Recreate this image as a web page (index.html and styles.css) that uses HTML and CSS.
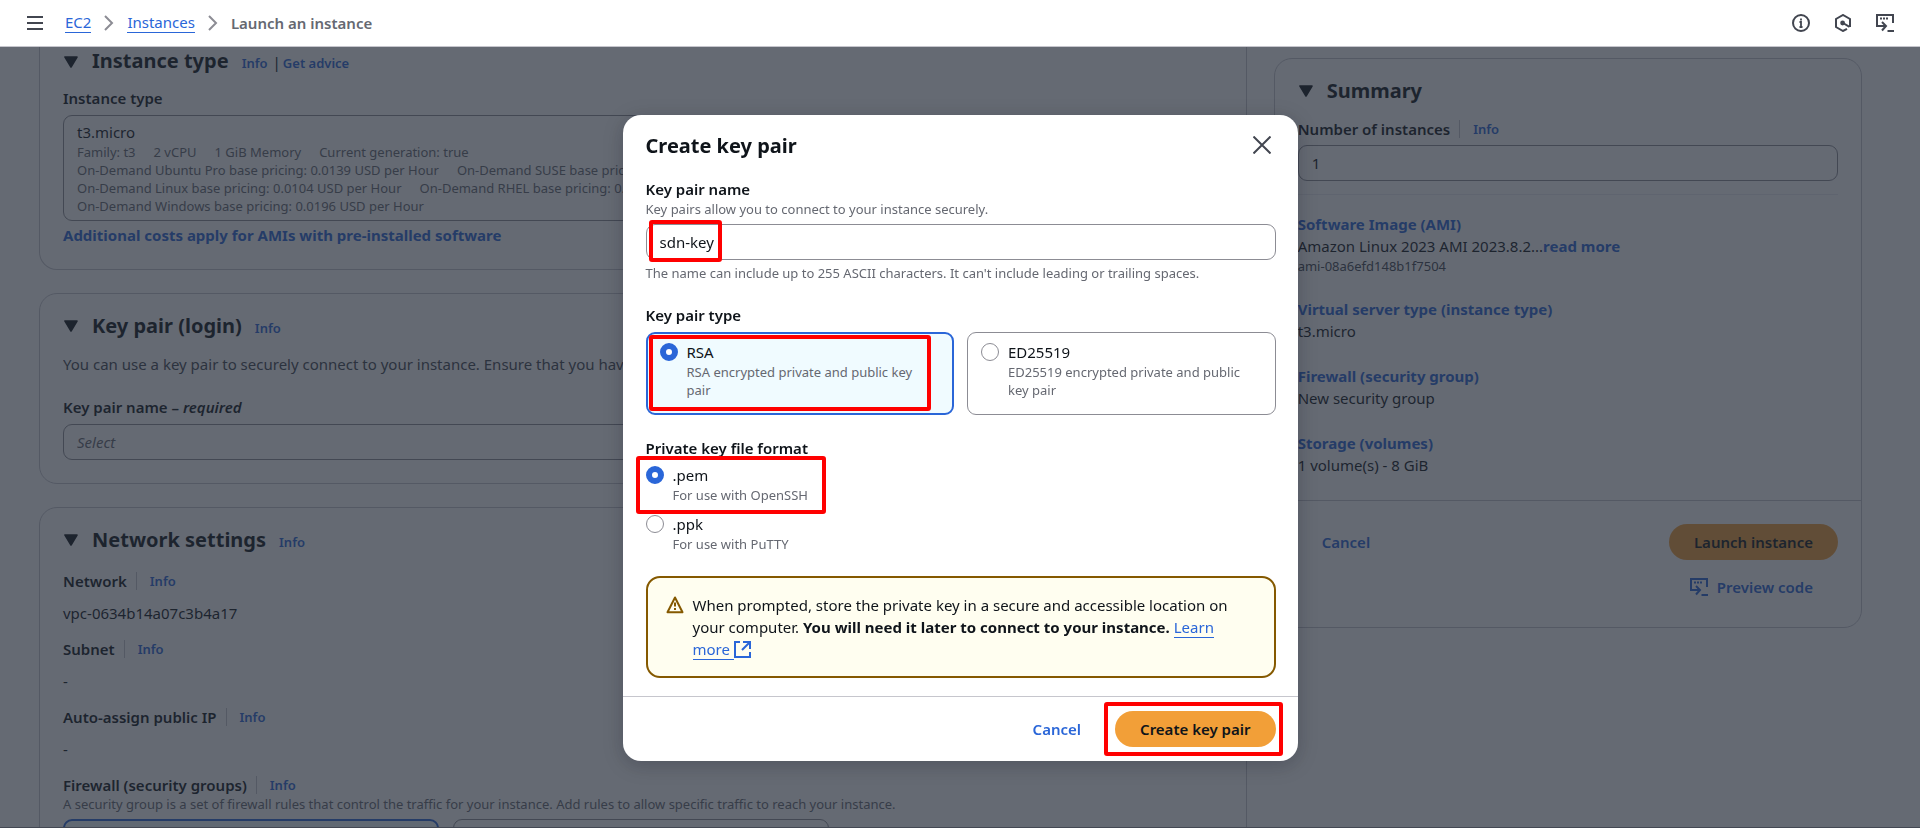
FILE: index.html
```html
<!DOCTYPE html>
<html lang="en">
<head>
<meta charset="utf-8">
<title>Launch an instance | EC2</title>
<link rel="stylesheet" href="styles.css">
</head>
<body>
<svg class="sprite" aria-hidden="true">
  <symbol id="caret" viewBox="0 0 14 12"><path d="M1 1h12L7 11z" fill="currentColor" stroke="currentColor" stroke-width="1.6" stroke-linejoin="round"/></symbol>
  <symbol id="chevron" viewBox="0 0 10 16"><path d="M1 1l7 7-7 7" fill="none" stroke="currentColor" stroke-width="2"/></symbol>
  <symbol id="shell" viewBox="0 0 18 18"><path d="M4 12H1V1h16v8" fill="none" stroke="currentColor" stroke-width="2"/><path d="M4 4.500h2m1 0h2m1 0h2M11.500 17H18" fill="none" stroke="currentColor" stroke-width="2"/><path d="M3 12h6.500M6 8l4 4-4 4.500" fill="none" stroke="currentColor" stroke-width="2"/></symbol>
</svg>

<header class="topbar">
  <button class="icon-button" type="button" aria-label="Open navigation">
    <svg width="16" height="16" viewBox="0 0 16 16"><path d="M0 2h16M0 8h16M0 14h16" stroke="currentColor" stroke-width="2"/></svg>
  </button>
  <nav class="crumbs" aria-label="Breadcrumbs">
    <a href="#">EC2</a>
    <svg width="10" height="16"><use href="#chevron"/></svg>
    <a href="#">Instances</a>
    <svg width="10" height="16"><use href="#chevron"/></svg>
    <span class="current">Launch an instance</span>
  </nav>
  <div class="tools">
    <button class="icon-button" type="button" aria-label="Info">
      <svg width="18" height="18" viewBox="0 0 18 18"><circle cx="9" cy="9" r="8" fill="none" stroke="currentColor" stroke-width="2"/><path d="M9 4.500v2M7.500 8H9v5M7.500 13h3" fill="none" stroke="currentColor" stroke-width="1.800"/></svg>
    </button>
    <button class="icon-button" type="button" aria-label="Assistant">
      <svg width="18" height="18" viewBox="0 0 18 18"><path d="M13 14.800L9 17 2 13V5l7-4 7 4v8" fill="none" stroke="currentColor" stroke-width="2"/><circle cx="8.600" cy="9" r="2.400" fill="currentColor"/><path d="M9 9l6.500 3.800" stroke="currentColor" stroke-width="2"/></svg>
    </button>
    <button class="icon-button" type="button" aria-label="CloudShell">
      <svg width="18" height="18"><use href="#shell"/></svg>
    </button>
  </div>
</header>

<main class="page">
  <div class="column">
    <section class="card card-first">
      <h2 class="heading"><svg class="caret" width="14" height="12"><use href="#caret"/></svg>Instance type <a class="info" href="#">Info</a><span class="bar">|</span><a class="info" href="#">Get advice</a></h2>
      <div class="label" id="type-label">Instance type</div>
      <button class="rich-select" type="button" aria-labelledby="type-label">
        <span class="rich-title">t3.micro</span>
        <span class="tags"><span>Family: t3</span><span>2 vCPU</span><span>1 GiB Memory</span><span>Current generation: true</span></span>
        <span class="tags"><span>On-Demand Ubuntu Pro base pricing: 0.0139 USD per Hour</span><span>On-Demand SUSE base pricing: 0.0104 USD per Hour</span></span>
        <span class="tags"><span>On-Demand Linux base pricing: 0.0104 USD per Hour</span><span>On-Demand RHEL base pricing: 0.0392 USD per Hour</span></span>
        <span class="tags"><span>On-Demand Windows base pricing: 0.0196 USD per Hour</span></span>
      </button>
      <a class="strong-link" href="#">Additional costs apply for AMIs with pre-installed software</a>
    </section>

    <section class="card card-key">
      <h2 class="heading"><svg class="caret" width="14" height="12"><use href="#caret"/></svg>Key pair (login) <a class="info" href="#">Info</a></h2>
      <p class="intro">You can use a key pair to securely connect to your instance. Ensure that you have access to the selected key pair.</p>
      <label class="label" for="key-pair">Key pair name – <i>required</i></label>
      <select class="field placeholder" id="key-pair"><option>Select</option></select>
    </section>

    <section class="card card-network">
      <h2 class="heading"><svg class="caret" width="14" height="12"><use href="#caret"/></svg>Network settings <a class="info" href="#">Info</a></h2>
      <dl class="facts">
        <div><dt>Network <a class="info ruled" href="#">Info</a></dt><dd>vpc-0634b14a07c3b4a17</dd></div>
        <div><dt>Subnet <a class="info ruled" href="#">Info</a></dt><dd>-</dd></div>
        <div><dt>Auto-assign public IP <a class="info ruled" href="#">Info</a></dt><dd>-</dd></div>
        <div><dt>Firewall (security groups) <a class="info ruled" href="#">Info</a></dt></div>
      </dl>
      <p class="hint">A security group is a set of firewall rules that control the traffic for your instance. Add rules to allow specific traffic to reach your instance.</p>
      <div class="group-tiles"><div class="group-tile chosen"></div><div class="group-tile"></div></div>
    </section>
  </div>

  <aside class="summary">
    <div class="summary-body">
      <h2 class="heading"><svg class="caret" width="14" height="12"><use href="#caret"/></svg>Summary</h2>
      <div class="count-label"><label class="label" for="count">Number of instances</label><a class="info ruled" href="#">Info</a></div>
      <input class="field" id="count" type="text" value="1">
      <hr class="rule">
      <div class="entries">
        <div><a class="strong-link" href="#">Software Image (AMI)</a><p>Amazon Linux 2023 AMI 2023.8.2...<a class="strong-link" href="#">read more</a></p><p class="ami">ami-08a6efd148b1f7504</p></div>
        <div><a class="strong-link" href="#">Virtual server type (instance type)</a><p>t3.micro</p></div>
        <div><a class="strong-link" href="#">Firewall (security group)</a><p>New security group</p></div>
        <div><a class="strong-link" href="#">Storage (volumes)</a><p>1 volume(s) - 8 GiB</p></div>
      </div>
    </div>
    <div class="summary-foot">
      <button class="button plain" type="button">Cancel</button>
      <div class="actions">
        <button class="button primary" type="button">Launch instance</button>
        <button class="button plain" type="button"><svg width="18" height="18"><use href="#shell"/></svg>Preview code</button>
      </div>
    </div>
  </aside>
</main>
<footer class="footline"></footer>

<div class="overlay">
  <form class="modal" role="dialog" aria-labelledby="modal-title">
    <div class="modal-head">
      <h2 id="modal-title">Create key pair</h2>
      <button class="icon-button" type="button" aria-label="Close">
        <svg width="18" height="18" viewBox="0 0 18 18"><path d="M.5.5l17 17M17.500.5l-17 17" stroke="currentColor" stroke-width="2"/></svg>
      </button>
    </div>
    <div class="modal-body">
      <div class="group">
        <label class="label" for="name">Key pair name</label>
        <p class="hint">Key pairs allow you to connect to your instance securely.</p>
        <div class="marked"><input class="field" id="name" type="text" value="sdn-key"><span class="mark mark-name"></span></div>
        <p class="hint constraint">The name can include up to 255 ASCII characters. It can't include leading or trailing spaces.</p>
      </div>
      <fieldset class="group">
        <legend class="label">Key pair type</legend>
        <div class="tiles">
          <label class="tile chosen"><input class="radio" type="radio" name="type" checked><span><span class="option">RSA</span><span class="hint">RSA encrypted private and public key pair</span></span><span class="mark mark-tile"></span></label>
          <label class="tile"><input class="radio" type="radio" name="type"><span><span class="option">ED25519</span><span class="hint">ED25519 encrypted private and public key pair</span></span></label>
        </div>
      </fieldset>
      <fieldset class="group formats">
        <legend class="label">Private key file format</legend>
        <label class="format"><input class="radio" type="radio" name="format" checked><span><span class="option">.pem</span><span class="hint">For use with OpenSSH</span></span><span class="mark mark-format"></span></label>
        <label class="format"><input class="radio" type="radio" name="format"><span><span class="option">.ppk</span><span class="hint">For use with PuTTY</span></span></label>
      </fieldset>
      <div class="alert">
        <svg width="18" height="18" viewBox="0 0 18 18"><path d="M9 1.500l7.500 14.800h-15z" fill="none" stroke="currentColor" stroke-width="2" stroke-linejoin="round"/><path d="M9 6.500v4M9 12v2" stroke="currentColor" stroke-width="2"/></svg>
        <p>When prompted, store the private key in a secure and accessible location on your computer. <b>You will need it later to connect to your instance.</b> <a href="#"><span class="underlined">Learn more&nbsp;</span><svg width="17" height="17" viewBox="0 0 17 17"><path d="M6 1H1v15h15v-5M9 1h7v7M16 1L8 9" fill="none" stroke="currentColor" stroke-width="2"/></svg></a></p>
      </div>
    </div>
    <div class="modal-foot">
      <button class="button plain" type="button">Cancel</button>
      <div class="marked"><button class="button primary" type="submit">Create key pair</button><span class="mark mark-submit"></span></div>
    </div>
  </form>
</div>
</body>
</html>
```
FILE: styles.css
```css
:root {
  --text: #0f141a;
  --muted: #656871;
  --icon: #424650;
  --blue: #2a66d8;
  --line: #c6c6cd;
  --field-line: #8c8c94;
  --orange: #f29f38;
}
* { box-sizing: border-box; }
body {
  margin: 0;
  height: 100vh;
  overflow: hidden;
  display: flex;
  flex-direction: column;
  font: 15px/22px "Noto Sans", sans-serif;
  color: var(--text);
  background: #fff;
}
h2, p, dl, dd, fieldset { margin: 0; padding: 0; border: 0; }
a { color: var(--blue); text-decoration: none; }
button, input, select { font: inherit; color: inherit; }
button { cursor: pointer; }
svg { flex: none; }
.sprite { position: absolute; width: 0; height: 0; }

.topbar {
  flex: none;
  height: 47px;
  display: flex;
  align-items: center;
  padding: 0 26px 0 27px;
  border-bottom: 1px solid var(--line);
}
.icon-button {
  display: flex;
  padding: 0;
  border: 0;
  background: none;
  color: var(--icon);
}
.crumbs { display: flex; align-items: center; gap: 13px; margin: 0 0 1px 22px; color: var(--field-line); }
.crumbs a { line-height: 20px; border-bottom: 1px solid var(--blue); }
.current { color: var(--muted); font-weight: 600; }
.tools { display: flex; gap: 24px; margin-left: auto; }

.page {
  flex: 1;
  min-height: 0;
  overflow: hidden;
  display: grid;
  grid-template-columns: 1207fr 588fr;
  gap: 27px;
  align-items: start;
  padding: 0 58px 0 39px;
}
.card, .summary { border: 1px solid var(--line); border-radius: 18px; }
.card { padding: 18px 23px 23px; margin-bottom: 23px; }
.card-first { border-top: 0; border-radius: 0 0 18px 18px; padding-top: 0; }
.heading { display: flex; align-items: baseline; font-size: 20px; line-height: 27px; font-weight: 700; }
.caret { align-self: center; margin: 0 14px 0 1px; }
.info { font-size: 13px; line-height: 18px; font-weight: 600; }
.heading .info { margin-left: 13px; }
.heading .bar { font-size: 15px; font-weight: 400; margin-left: 5px; }
.heading .bar + .info { margin-left: 2px; }
.label { display: block; padding: 0; font-weight: 600; }
.card-first .label { margin: 11px 0 6px; }
.rich-select {
  display: block;
  width: 100%;
  padding: 5px 13px;
  border: 1px solid var(--field-line);
  border-radius: 9px;
  background: none;
  text-align: left;
}
.rich-title { display: block; }
.tags { display: flex; gap: 18px; color: var(--muted); font-size: 13px; line-height: 18px; white-space: nowrap; overflow: hidden; }
.strong-link { font-weight: 700; }
.card-first > .strong-link { display: block; margin-top: 3px; }
.intro { margin: 14px 0 21px; color: var(--icon); white-space: nowrap; overflow: hidden; }
.field {
  display: block;
  width: 100%;
  height: 36px;
  padding: 0 13px;
  border: 1px solid var(--field-line);
  border-radius: 9px;
  background: none;
  appearance: none;
}
.placeholder { margin-top: 6px; font-style: italic; color: var(--muted); }
.facts { margin-top: 17px; }
.facts dt { display: flex; align-items: center; font-weight: 600; }
.facts dd { margin: 10px 0 14px; }
.ruled { margin-left: 9px; padding-left: 13px; border-left: 1px solid var(--line); }
.hint { display: block; color: var(--muted); font-size: 13px; line-height: 18px; }
.card-network .hint { margin-top: -1px; }
.group-tiles { display: grid; grid-template-columns: 376px 376px; gap: 14px; margin-top: 6px; }
.group-tile { height: 80px; border: 1px solid var(--field-line); border-radius: 9px; }
.chosen { border: 2px solid var(--blue); background: #f0fbff; }

.summary { margin-top: 11px; }
.summary-body { padding: 18px 23px 24px; }
.count-label { display: flex; align-items: center; margin: 14px 0 5px; }
.rule { margin: 13px 0 18px; border: 0; border-top: 1px solid #ebebf0; }
.entries { display: grid; gap: 23px; }
.ami { color: var(--icon); font-size: 13px; line-height: 18px; }
.summary-foot { display: flex; justify-content: space-between; align-items: flex-start; padding: 23px 23px 22px 0; border-top: 1px solid var(--line); }
.actions { display: flex; flex-direction: column; align-items: flex-end; gap: 9px; }
.button {
  display: flex;
  align-items: center;
  gap: 9px;
  height: 36px;
  padding: 0 25px;
  border: 0;
  border-radius: 18px;
  font-weight: 600;
}
.plain { background: none; color: var(--blue); }
.primary { background: var(--orange); }
.summary-foot > .plain { margin-left: 22px; }
.footline { flex: none; height: 1px; background: var(--field-line); }

.overlay {
  position: fixed;
  inset: 47px 0 0;
  display: flex;
  align-items: center;
  justify-content: center;
  background: rgba(35, 43, 55, 0.7);
}
.modal { width: 675px; border-radius: 18px; background: #fff; box-shadow: 0 4px 20px 1px rgba(0, 7, 22, 0.2); }
.modal-head { display: flex; justify-content: space-between; align-items: center; padding: 17px 27px 13px 23px; }
.modal-head h2 { font-size: 20px; line-height: 27px; font-weight: 700; }
.modal-body { padding: 6px 22px 18px 23px; }
.group { margin-bottom: 22px; }
.marked { position: relative; }
.group > .hint + .marked { margin-top: 6px; }
.constraint { margin-top: 4px; }
.tiles { display: grid; grid-template-columns: 1fr 1fr; gap: 13px; margin-top: 6px; }
.tile, .format { position: relative; display: flex; gap: 9px; }
.tile { min-height: 83px; padding: 8px 26px 8px 13px; border: 1px solid var(--field-line); border-radius: 9px; }
.tile.chosen { padding: 7px 25px 7px 12px; border: 2px solid var(--blue); }
.option { display: block; }
.radio {
  flex: none;
  appearance: none;
  width: 18px;
  height: 18px;
  margin: 2px 0;
  border: 1px solid var(--field-line);
  border-radius: 50%;
  background: #fff;
}
.radio:checked { border: 6px solid var(--blue); }
.format { margin-top: 5px; }
.format + .format { margin-top: 9px; }
.formats { margin-bottom: 23px; }
.mark { position: absolute; border: 4px solid #f00; border-radius: 3px; pointer-events: none; }
.mark-name { left: 3px; top: -4px; width: 73px; height: 42px; }
.mark-tile { inset: 1px 21px 2px 1px; }
.mark-format { left: -10px; top: -8px; width: 190px; height: 58px; }
.mark-submit { inset: -9px -7px -9px -11px; }
.alert {
  display: flex;
  gap: 9px;
  padding: 16px 18px;
  border: 2px solid #855900;
  border-radius: 14px;
  background: #fffef0;
}
.alert > svg { margin-top: 2px; color: #855900; }
.alert p { padding-right: 24px; }
.underlined { border-bottom: 1px solid var(--blue); }
.alert a svg { vertical-align: -3px; }
.modal-foot { display: flex; justify-content: flex-end; align-items: center; gap: 9px; padding: 14px 22px; border-top: 1px solid var(--line); }
```
